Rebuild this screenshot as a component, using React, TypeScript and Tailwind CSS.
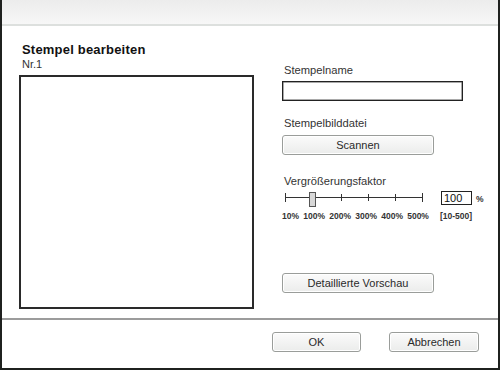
import React from 'react';

const font = { fontFamily: '"Liberation Sans", Arial, sans-serif' };

const Btn = ({ label, w }: { label: string; w: string }) => (
  <div
    className={`${w} h-[20px] flex items-center justify-center rounded-[3px] border border-[#9a9d9a] bg-gradient-to-b from-[#fbfbfb] to-[#ebeceb] text-[11px] text-[#2a2a2a] shadow-[inset_0_0_0_1px_#ffffff]`}
  >
    {label}
  </div>
);

const Slider = () => {
  const ticks = [3, 30, 59, 86, 113, 140];
  return (
    <svg width="147" height="20" viewBox="0 0 147 20" className="block">
      <line x1="3" y1="8.5" x2="140" y2="8.5" stroke="#333" strokeWidth="1" />
      {ticks.map((x, i) => (
        <line
          key={x}
          x1={x + 0.5}
          x2={x + 0.5}
          y1={i === 0 || i === ticks.length - 1 ? 4 : 5}
          y2={i === 0 || i === ticks.length - 1 ? 13 : 12}
          stroke="#333"
          strokeWidth="1"
        />
      ))}
      <rect x="27.5" y="3.5" width="6" height="14" fill="#d8d8d8" stroke="#555" strokeWidth="1" />
    </svg>
  );
};

export default function App() {
  return (
    <div
      style={font}
      className="w-[500px] h-[370px] flex flex-col bg-white border-x-2 border-b-2 border-[#1f211f] text-[#222]"
    >
      {/* title bar */}
      <div className="h-[26px] shrink-0 bg-gradient-to-b from-[#ececec] to-[#f7f7f7] border-b-2 border-[#dde0de]" />

      {/* body */}
      <div className="h-[292px] flex pl-[17px]">
        <div className="w-[235px] pt-[16px]">
          <div className="ml-[3px] text-[13px] leading-[15px] font-bold tracking-[0.2px] text-[#111]">Stempel bearbeiten</div>
          <div className="ml-[3px] mt-[1px] text-[11px] leading-[13px] text-[#333]">Nr.1</div>
          <div className="mt-[4px] w-[235px] h-[234px] border-2 border-[#2a2a2a]" />
        </div>

        <div className="ml-[28px] pt-[38px] w-[200px] text-[11.2px] text-[#333]">
          <div className="ml-[2px] leading-[13px]">Stempelname</div>
          <div className="mt-[4px] w-[181px] h-[20px] border border-[#222] shadow-[inset_0_0_0_0.5px_#555]" />

          <div className="ml-[2px] mt-[16px] leading-[13px]">Stempelbilddatei</div>
          <div className="mt-[5px]">
            <Btn label="Scannen" w="w-[152px]" />
          </div>

          <div className="ml-[2px] mt-[20px] leading-[13px]">Vergrößerungsfaktor</div>
          <div className="flex mt-[1px]">
            <div className="w-[147px]">
              <Slider />
              <div className="flex justify-between mt-[2px] text-[8.5px] leading-[10px] font-bold text-[#333]">
                <span>10%</span>
                <span>100%</span>
                <span>200%</span>
                <span>300%</span>
                <span>400%</span>
                <span>500%</span>
              </div>
            </div>
            <div className="ml-[12px] pt-[2px]">
              <div className="flex items-center">
                <div className="w-[31px] h-[14px] border border-[#222] bg-white text-[11px] leading-[12px] pl-[2px] text-[#111]">100</div>
                <span className="ml-[4px] text-[8.5px] font-bold mt-[2px]">%</span>
              </div>
              <div className="mt-[5px] -ml-[1px] text-[8.5px] leading-[10px] font-bold">[10-500]</div>
            </div>
          </div>

          <div className="mt-[52px]">
            <Btn label="Detaillierte Vorschau" w="w-[152px]" />
          </div>
        </div>
      </div>

      {/* separator */}
      <div className="h-[2px] shrink-0 bg-[#9c9c9c]" />

      {/* footer */}
      <div className="flex-1 flex justify-end gap-[28px] pt-[12px] pr-[19px]">
        <Btn label="OK" w="w-[89px]" />
        <Btn label="Abbrechen" w="w-[90px]" />
      </div>
    </div>
  );
}
